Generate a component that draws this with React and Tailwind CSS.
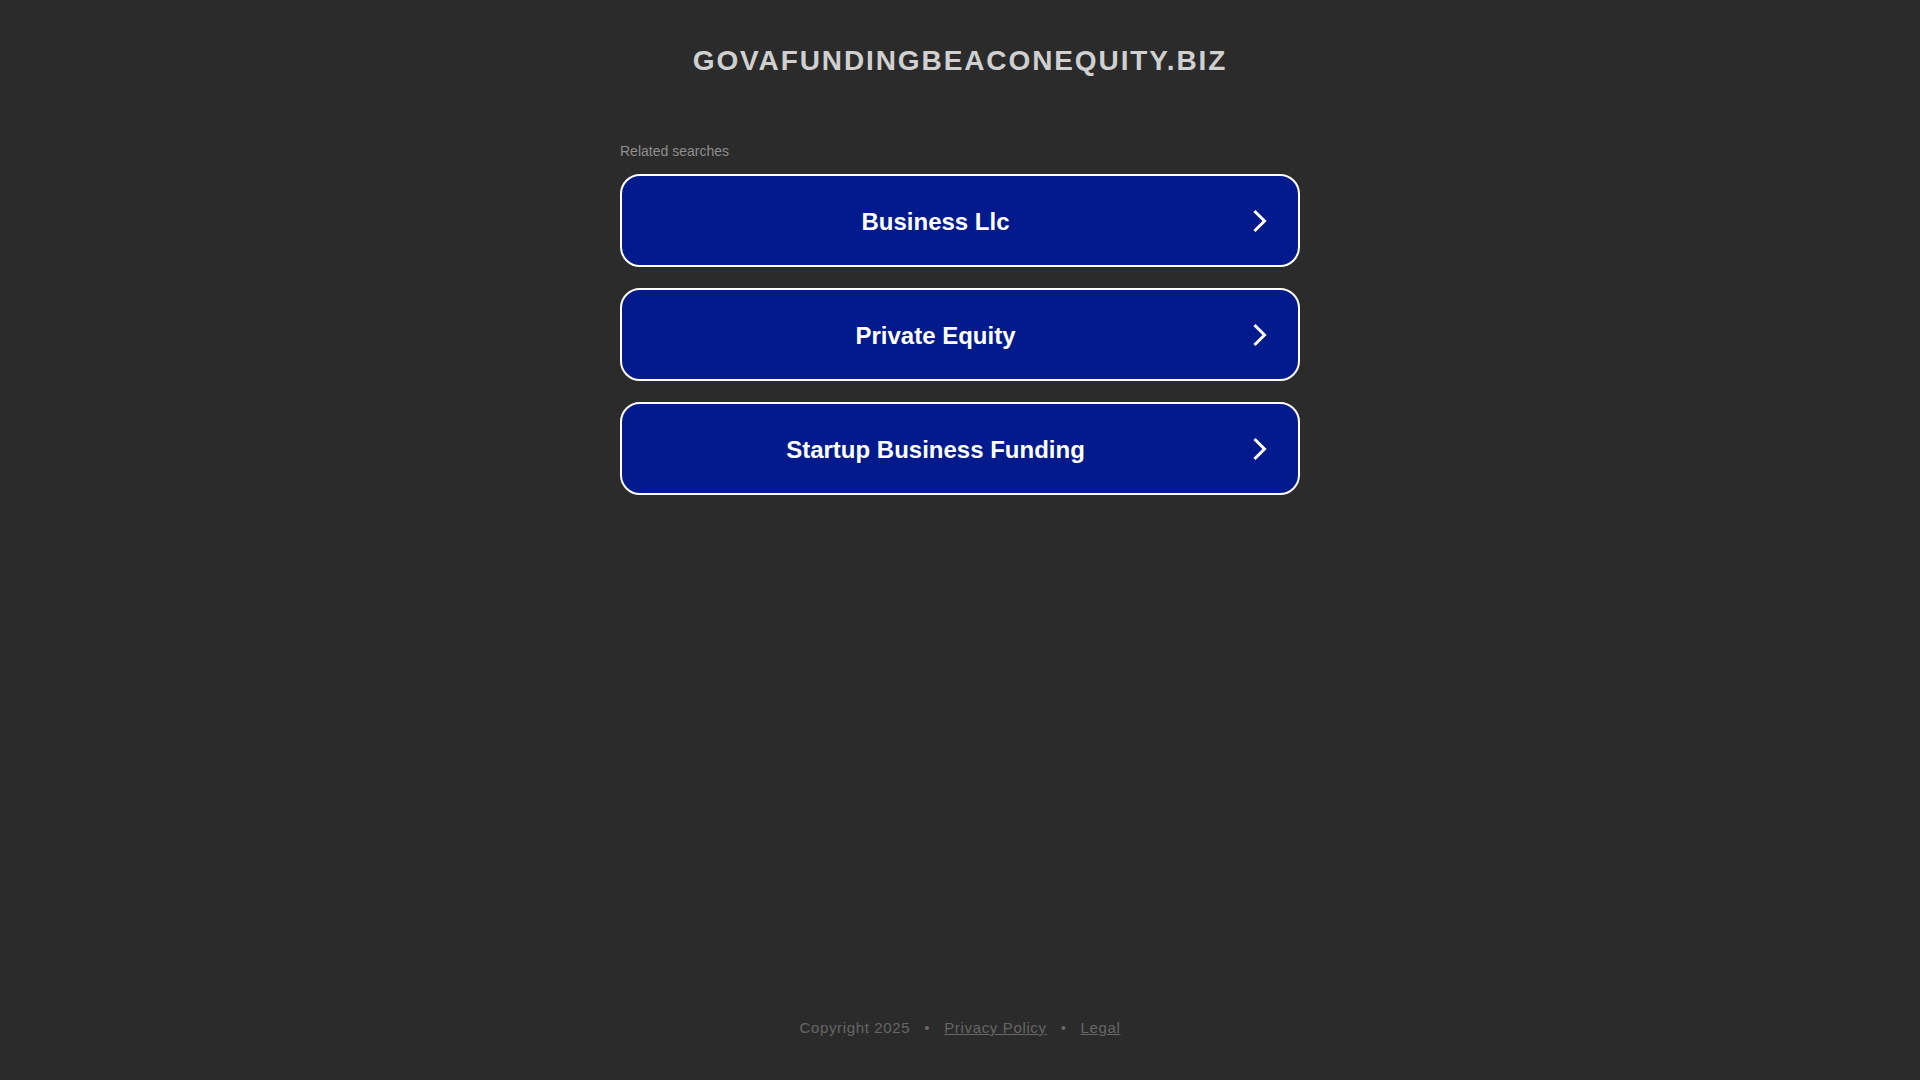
import React from "react";

const searches = ["Business Llc", "Private Equity", "Startup Business Funding"];

const Chevron = () => (
  <svg width="16" height="24" viewBox="0 0 16 24" className="absolute right-[30px] top-1/2 -translate-y-1/2">
    <path d="M3.5 3 L12.5 12 L3.5 21" fill="none" stroke="#fff" strokeWidth="3" strokeLinecap="square" />
  </svg>
);

export default function App() {
  return (
    <div
      className="min-h-screen w-full bg-[#2b2b2b] flex flex-col items-center"
      style={{ fontFamily: '"Liberation Sans", Arial, sans-serif' }}
    >
      <h1 className="mt-[44px] text-[28px] leading-[34px] font-bold tracking-[1.9px] text-[#d0d0d0] uppercase">
        govafundingbeaconequity.biz
      </h1>

      <div className="mt-[63px] w-[680px]">
        <p className="text-[14px] leading-[20px] text-[#8e8e8e]">Related searches</p>
        <div className="mt-[13px] flex flex-col gap-[21px]">
          {searches.map((s) => (
            <a
              key={s}
              href="#"
              className="relative h-[93px] rounded-[20px] border-2 border-white bg-[#021a8b] flex items-center justify-center pl-[20px] pr-[69px] pt-[2px]"
            >
              <span className="text-[24px] font-bold text-white">{s}</span>
              <Chevron />
            </a>
          ))}
        </div>
      </div>

      <div className="mt-auto mb-[42px] text-[15px] leading-[20px] tracking-[0.65px] text-[#666666] flex gap-[14px]">
        <span>Copyright 2025</span>
        <span>•</span>
        <a href="#" className="underline">Privacy Policy</a>
        <span>•</span>
        <a href="#" className="underline">Legal</a>
      </div>
    </div>
  );
}
